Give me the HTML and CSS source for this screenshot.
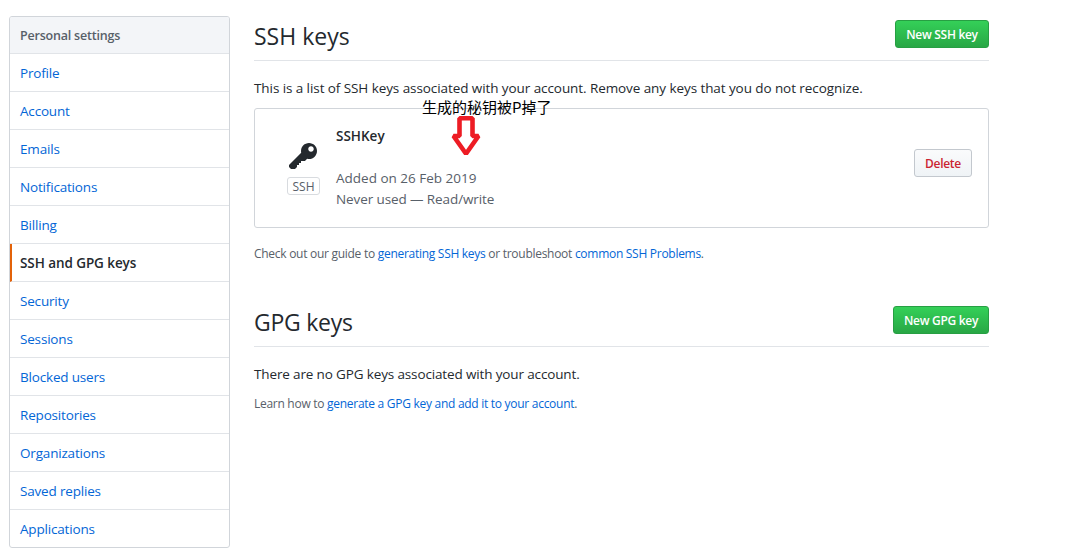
FILE: index.html
```html
<!DOCTYPE html>
<html lang="en">
<head>
<meta charset="utf-8">
<title>SSH and GPG keys</title>
<link rel="stylesheet" href="styles.css">
</head>
<body>
<div class="page">
  <nav class="menu">
    <h3 class="menu-heading">Personal settings</h3>
    <a class="menu-item">Profile</a>
    <a class="menu-item">Account</a>
    <a class="menu-item">Emails</a>
    <a class="menu-item">Notifications</a>
    <a class="menu-item">Billing</a>
    <a class="menu-item selected">SSH and GPG keys</a>
    <a class="menu-item">Security</a>
    <a class="menu-item">Sessions</a>
    <a class="menu-item">Blocked users</a>
    <a class="menu-item">Repositories</a>
    <a class="menu-item">Organizations</a>
    <a class="menu-item">Saved replies</a>
    <a class="menu-item">Applications</a>
  </nav>
  <main class="content">
    <header class="subhead">
      <h2 class="title">SSH keys</h2>
      <button class="btn btn-primary btn-ssh">New SSH key</button>
    </header>
    <p class="lead">This is a list of SSH keys associated with your account. Remove any keys that you do not recognize.</p>
    <section class="key-box">
      <div class="key-type">
        <svg class="key-icon" viewBox="0 0 14 16" width="28" height="32"><path fill-rule="evenodd" d="M12.83 2.17C12.08 1.42 11.14 1.03 10 1c-1.13.03-2.08.42-2.83 1.17S6.04 3.86 6.01 5c0 .3.03.59.09.89L0 12v1l1 1h2l1-1v-1h1v-1h1v-1h2l1.09-1.11c.3.08.59.11.91.11 1.14-.03 2.08-.42 2.83-1.17S13.97 6.14 14 5c-.03-1.14-.42-2.08-1.17-2.83zM11 5.38c-.77 0-1.38-.61-1.38-1.38 0-.77.61-1.38 1.38-1.38.77 0 1.38.61 1.38 1.38 0 .77-.61 1.38-1.38 1.38z"/></svg>
        <span class="key-label">SSH</span>
      </div>
      <div class="key-info">
        <strong class="key-name">SSHKey</strong>
        <span class="key-added">Added on 26 Feb 2019</span>
        <span class="key-used">Never used — Read/write</span>
      </div>
      <button class="btn btn-danger">Delete</button>
      <div class="note">
        <span class="note-text" lang="zh">生成的秘钥被P掉了</span>
        <svg class="note-arrow" width="32" height="42" viewBox="0 0 32 42"><path d="M9.5 2.3h13v17.7h6L16 37.800 3.500 20h6z"/></svg>
      </div>
    </section>
    <p class="help help-ssh">Check out our guide to <a>generating SSH keys</a> or troubleshoot <a>common SSH Problems</a>.</p>
    <header class="subhead subhead-gpg">
      <h2 class="title title-gpg">GPG keys</h2>
      <button class="btn btn-primary btn-gpg">New GPG key</button>
    </header>
    <p class="lead lead-gpg">There are no GPG keys associated with your account.</p>
    <p class="help help-gpg">Learn how to <a>generate a GPG key and add it to your account</a>.</p>
  </main>
</div>
</body>
</html>
```
FILE: styles.css
```css
* { box-sizing: border-box; }
body {
  margin: 0;
  background: #fff;
  color: #24292e;
  font: 13.5px/21px "Open Sans", "Noto Sans", sans-serif;
}
h2, h3, p { margin: 0; }
a { color: #0366d6; text-decoration: none; }
.page { display: flex; gap: 24px; padding: 16px 93px 0 9px; }
.menu {
  width: 221px;
  height: 532px;
  border: 1px solid #d1d5da;
  border-radius: 3px;
  overflow: hidden;
}
.menu-heading, .menu-item {
  display: block;
  height: 38px;
  padding: 9px 10px 7px;
  border-bottom: 1px solid #e1e4e8;
  letter-spacing: -0.18px;
  white-space: nowrap;
}
.menu-heading {
  height: 37px;
  background: #f3f5f8;
  color: #586069;
  font-size: 12.5px;
  font-weight: 600;
  line-height: 20px;
  letter-spacing: -0.2px;
}
.menu-item:last-child { border-bottom: 0; }
.menu-item.selected {
  padding-left: 8px;
  border-left: 2px solid #e36209;
  color: #24292e;
  font-weight: 600;
  letter-spacing: -0.08px;
}
.content { width: 735px; white-space: nowrap; }
.subhead {
  display: flex;
  justify-content: space-between;
  height: 45px;
  padding-top: 4px;
  border-bottom: 1px solid #e1e4e8;
}
.subhead-gpg { margin-top: 38px; }
.title { font-size: 23px; font-weight: 400; line-height: 33px; }
.title-gpg { letter-spacing: -0.25px; }
.btn {
  height: 28px;
  padding: 1px 0 0;
  border: 1px solid #c3c8ce;
  border-radius: 3px;
  font: 600 12px/25px "Open Sans", "Noto Sans", sans-serif;
  letter-spacing: -0.3px;
  text-align: center;
}
.btn-primary {
  border-color: #279f43;
  background: linear-gradient(#34d058, #28a745);
  color: #fff;
}
.btn-ssh { width: 94px; }
.btn-gpg { width: 96px; }
.btn-danger {
  width: 58px;
  background: linear-gradient(#fafbfc, #eff3f6);
  color: #cb2431;
}
.lead { margin-top: 17px; letter-spacing: -0.08px; }
.key-box {
  position: relative;
  display: flex;
  height: 120px;
  margin-top: 9px;
  padding: 0 16px 0 32px;
  border: 1px solid #d1d5da;
  border-radius: 3px;
}
.key-type {
  display: flex;
  flex-direction: column;
  align-items: center;
  width: 33px;
  padding-top: 32px;
}
.key-icon { margin-right: 2px; fill: #24292e; }
.key-label {
  width: 33px;
  height: 18px;
  margin-top: 4px;
  border: 1px solid #d8dbdf;
  border-radius: 3px;
  color: #586069;
  font-size: 12px;
  line-height: 17px;
  text-align: center;
}
.key-info {
  display: flex;
  flex: 1;
  flex-direction: column;
  align-items: flex-start;
  padding: 17px 0 0 16px;
  color: #586069;
}
.key-name { margin-bottom: 21px; color: #24292e; font-weight: 600; }
.key-used { letter-spacing: -0.1px; }
.key-box .btn { margin-top: 40px; }
.note { position: absolute; left: 167px; top: -13px; color: #000; }
.note-text {
  display: block;
  font: 15px/22px "Noto Sans CJK SC", sans-serif;
}
.note-arrow {
  display: block;
  margin: -2px 0 0 28px;
  fill: #fff;
  stroke: #ed1c24;
  stroke-width: 4.6;
  stroke-linejoin: bevel;
}
.help { color: #586069; font-size: 12px; line-height: 20px; letter-spacing: -0.28px; }
.help-ssh { margin-top: 16px; }
.lead-gpg { margin-top: 17px; letter-spacing: -0.14px; }
.help-gpg { margin-top: 9px; }
```
